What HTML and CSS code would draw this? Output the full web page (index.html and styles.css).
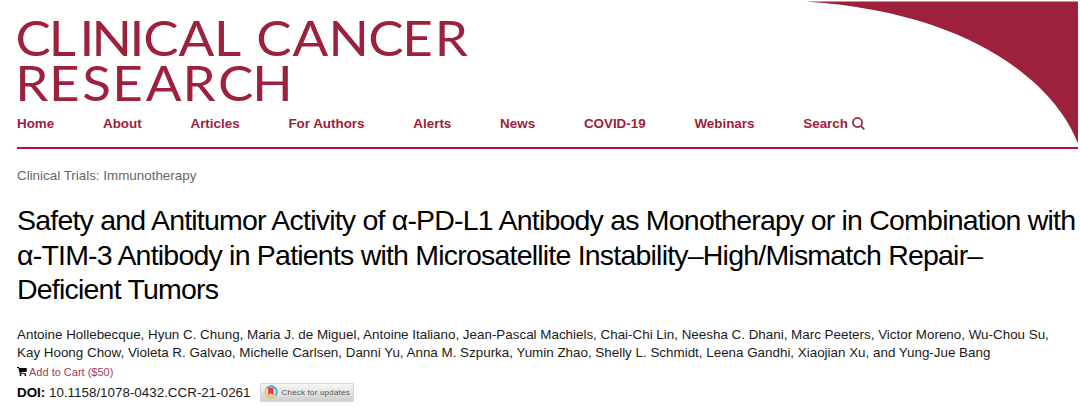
FILE: index.html
```html
<!DOCTYPE html>
<html lang="en">
<head>
    <meta charset="UTF-8">
    <meta name="viewport" content="width=device-width, initial-scale=1.0">
    <title>Clinical Cancer Research</title>
    <link rel="stylesheet" href="styles.css">
</head>
<body>
    <header class="header">
        <svg class="swoosh" width="274" height="144" viewBox="0 0 274 144">
            <path d="M2 1.500H274V143.500C250 81 164 12 2 1.500Z" fill="#9d213c"/>
        </svg>
        <svg class="logo" width="460" height="92" viewBox="0 0 460 92">
            <g transform="scale(1.080 1)">
                <text y="42" x="-1.300 29.300 57.800 68.900 104.200 116.900 149.500 182.500 208 221.500 255.200 288.500 325.300 356.800 386.800">CLINICAL CANCER</text>
                <text y="87" x="-1.700 29.700 60.500 88.300 119.200 153.300 186.200 217.800">RESEARCH</text>
            </g>
        </svg>
        <nav class="nav">
            <a href="#">Home</a>
            <a href="#">About</a>
            <a href="#">Articles</a>
            <a href="#">For Authors</a>
            <a href="#">Alerts</a>
            <a href="#">News</a>
            <a href="#">COVID-19</a>
            <a href="#">Webinars</a>
            <a href="#">Search
                <svg class="search-icon" width="13" height="13" viewBox="0 0 13 13">
                    <circle cx="5.500" cy="5.500" r="4.600"/>
                    <path d="M8.800 8.800L12.300 12.300"/>
                </svg>
            </a>
        </nav>
    </header>
    <main class="article">
        <p class="category">Clinical Trials: Immunotherapy</p>
        <h1 class="title">Safety and Antitumor Activity of α-PD-L1 Antibody as Monotherapy or in Combination with<br>α-TIM-3 Antibody in Patients with Microsatellite Instability–High/Mismatch Repair–<br>Deficient Tumors</h1>
        <p class="authors">Antoine Hollebecque, Hyun C. Chung, Maria J. de Miguel, Antoine Italiano, Jean-Pascal Machiels, Chai-Chi Lin, Neesha C. Dhani, Marc Peeters, Victor Moreno, Wu-Chou Su,<br>Kay Hoong Chow, Violeta R. Galvao, Michelle Carlsen, Danni Yu, Anna M. Szpurka, Yumin Zhao, Shelly L. Schmidt, Leena Gandhi, Xiaojian Xu, and Yung-Jue Bang</p>
        <a href="#" class="cart">
            <svg width="10" height="9" viewBox="0 0 10 9">
                <path d="M0 0H2L2.300 1H9.700V4.800L3.400 5.500L3.600 6.200H9V7H2.800L1.400 .900H0Z"/>
                <circle cx="3.500" cy="8" r="1"/>
                <circle cx="8.300" cy="8" r="1"/>
            </svg>
            <span>Add to Cart ($50)</span>
        </a>
        <div class="doi">
            <p><strong>DOI:</strong> 10.1158/1078-0432.CCR-21-0261</p>
            <button class="updates">
                <svg width="14" height="14" viewBox="0 0 14 14">
                    <path class="ring-blue" d="M2.500 3.400A5.700 5.700 0 0 1 11.500 10.600"/>
                    <path class="ring-yellow" d="M11.500 10.600A5.700 5.700 0 0 1 2.500 3.400"/>
                    <path class="bookmark" d="M4.200 2.800H9.500V10L6.900 8.300L4.200 10Z"/>
                </svg>
                <span>Check for updates</span>
            </button>
        </div>
    </main>
</body>
</html>
```

FILE: styles.css
```css
* {
    margin: 0;
    padding: 0;
    box-sizing: border-box;
}

body {
    font-family: "Liberation Sans", Arial, sans-serif;
    background: #fff;
    color: #1a1a1a;
}

a {
    text-decoration: none;
}

.header {
    position: relative;
    height: 149px;
    margin: 0 2px 0 17px;
    padding-top: 14px;
    border-bottom: 2px solid #bb1141;
}

.swoosh {
    position: absolute;
    top: 0;
    right: 0;
}

.logo {
    display: block;
    overflow: visible;
    font-family: Lato, sans-serif;
    font-size: 49px;
    fill: #9d213c;
}

.nav {
    position: relative;
    display: flex;
    gap: 48.8px;
    margin-top: 10px;
    line-height: 16px;
}

.nav a {
    color: #9d213c;
    font-size: 13.4px;
    font-weight: bold;
    white-space: nowrap;
}

.search-icon {
    vertical-align: -2px;
    fill: none;
    stroke: #9d213c;
    stroke-width: 1.7;
}

.article {
    padding: 18px 0 0 17px;
}

.category {
    color: #666;
    font-size: 13.4px;
    line-height: 18px;
}

.title {
    margin-top: 18px;
    color: #000;
    font-size: 28.5px;
    font-weight: normal;
    letter-spacing: -0.79px;
    line-height: 34.5px;
    white-space: nowrap;
}

.authors {
    margin-top: 19px;
    font-size: 13.4px;
    line-height: 18px;
    white-space: nowrap;
}

.cart {
    display: flex;
    align-items: center;
    gap: 2px;
    height: 20px;
    color: #9d3d58;
    font-size: 11px;
}

.cart svg {
    fill: #000;
}

.doi {
    display: flex;
    align-items: center;
    gap: 9px;
    margin-top: 1px;
    font-size: 13.4px;
}

.doi strong {
    color: #000;
}

.updates {
    display: flex;
    align-items: center;
    gap: 4px;
    width: 94px;
    height: 19px;
    padding-left: 3px;
    border: 1px solid #d8d8d8;
    border-radius: 1px;
    background: linear-gradient(#f7f7f7, #cfcfcf);
    color: #555;
    font-family: "Liberation Sans", Arial, sans-serif;
    font-size: 8px;
    letter-spacing: 0.2px;
    white-space: nowrap;
}

.ring-blue,
.ring-yellow {
    fill: none;
    stroke: #3eb1c8;
    stroke-width: 1.8;
}

.ring-yellow {
    stroke: #ebc64a;
}

.bookmark {
    fill: #ef3340;
}
```
